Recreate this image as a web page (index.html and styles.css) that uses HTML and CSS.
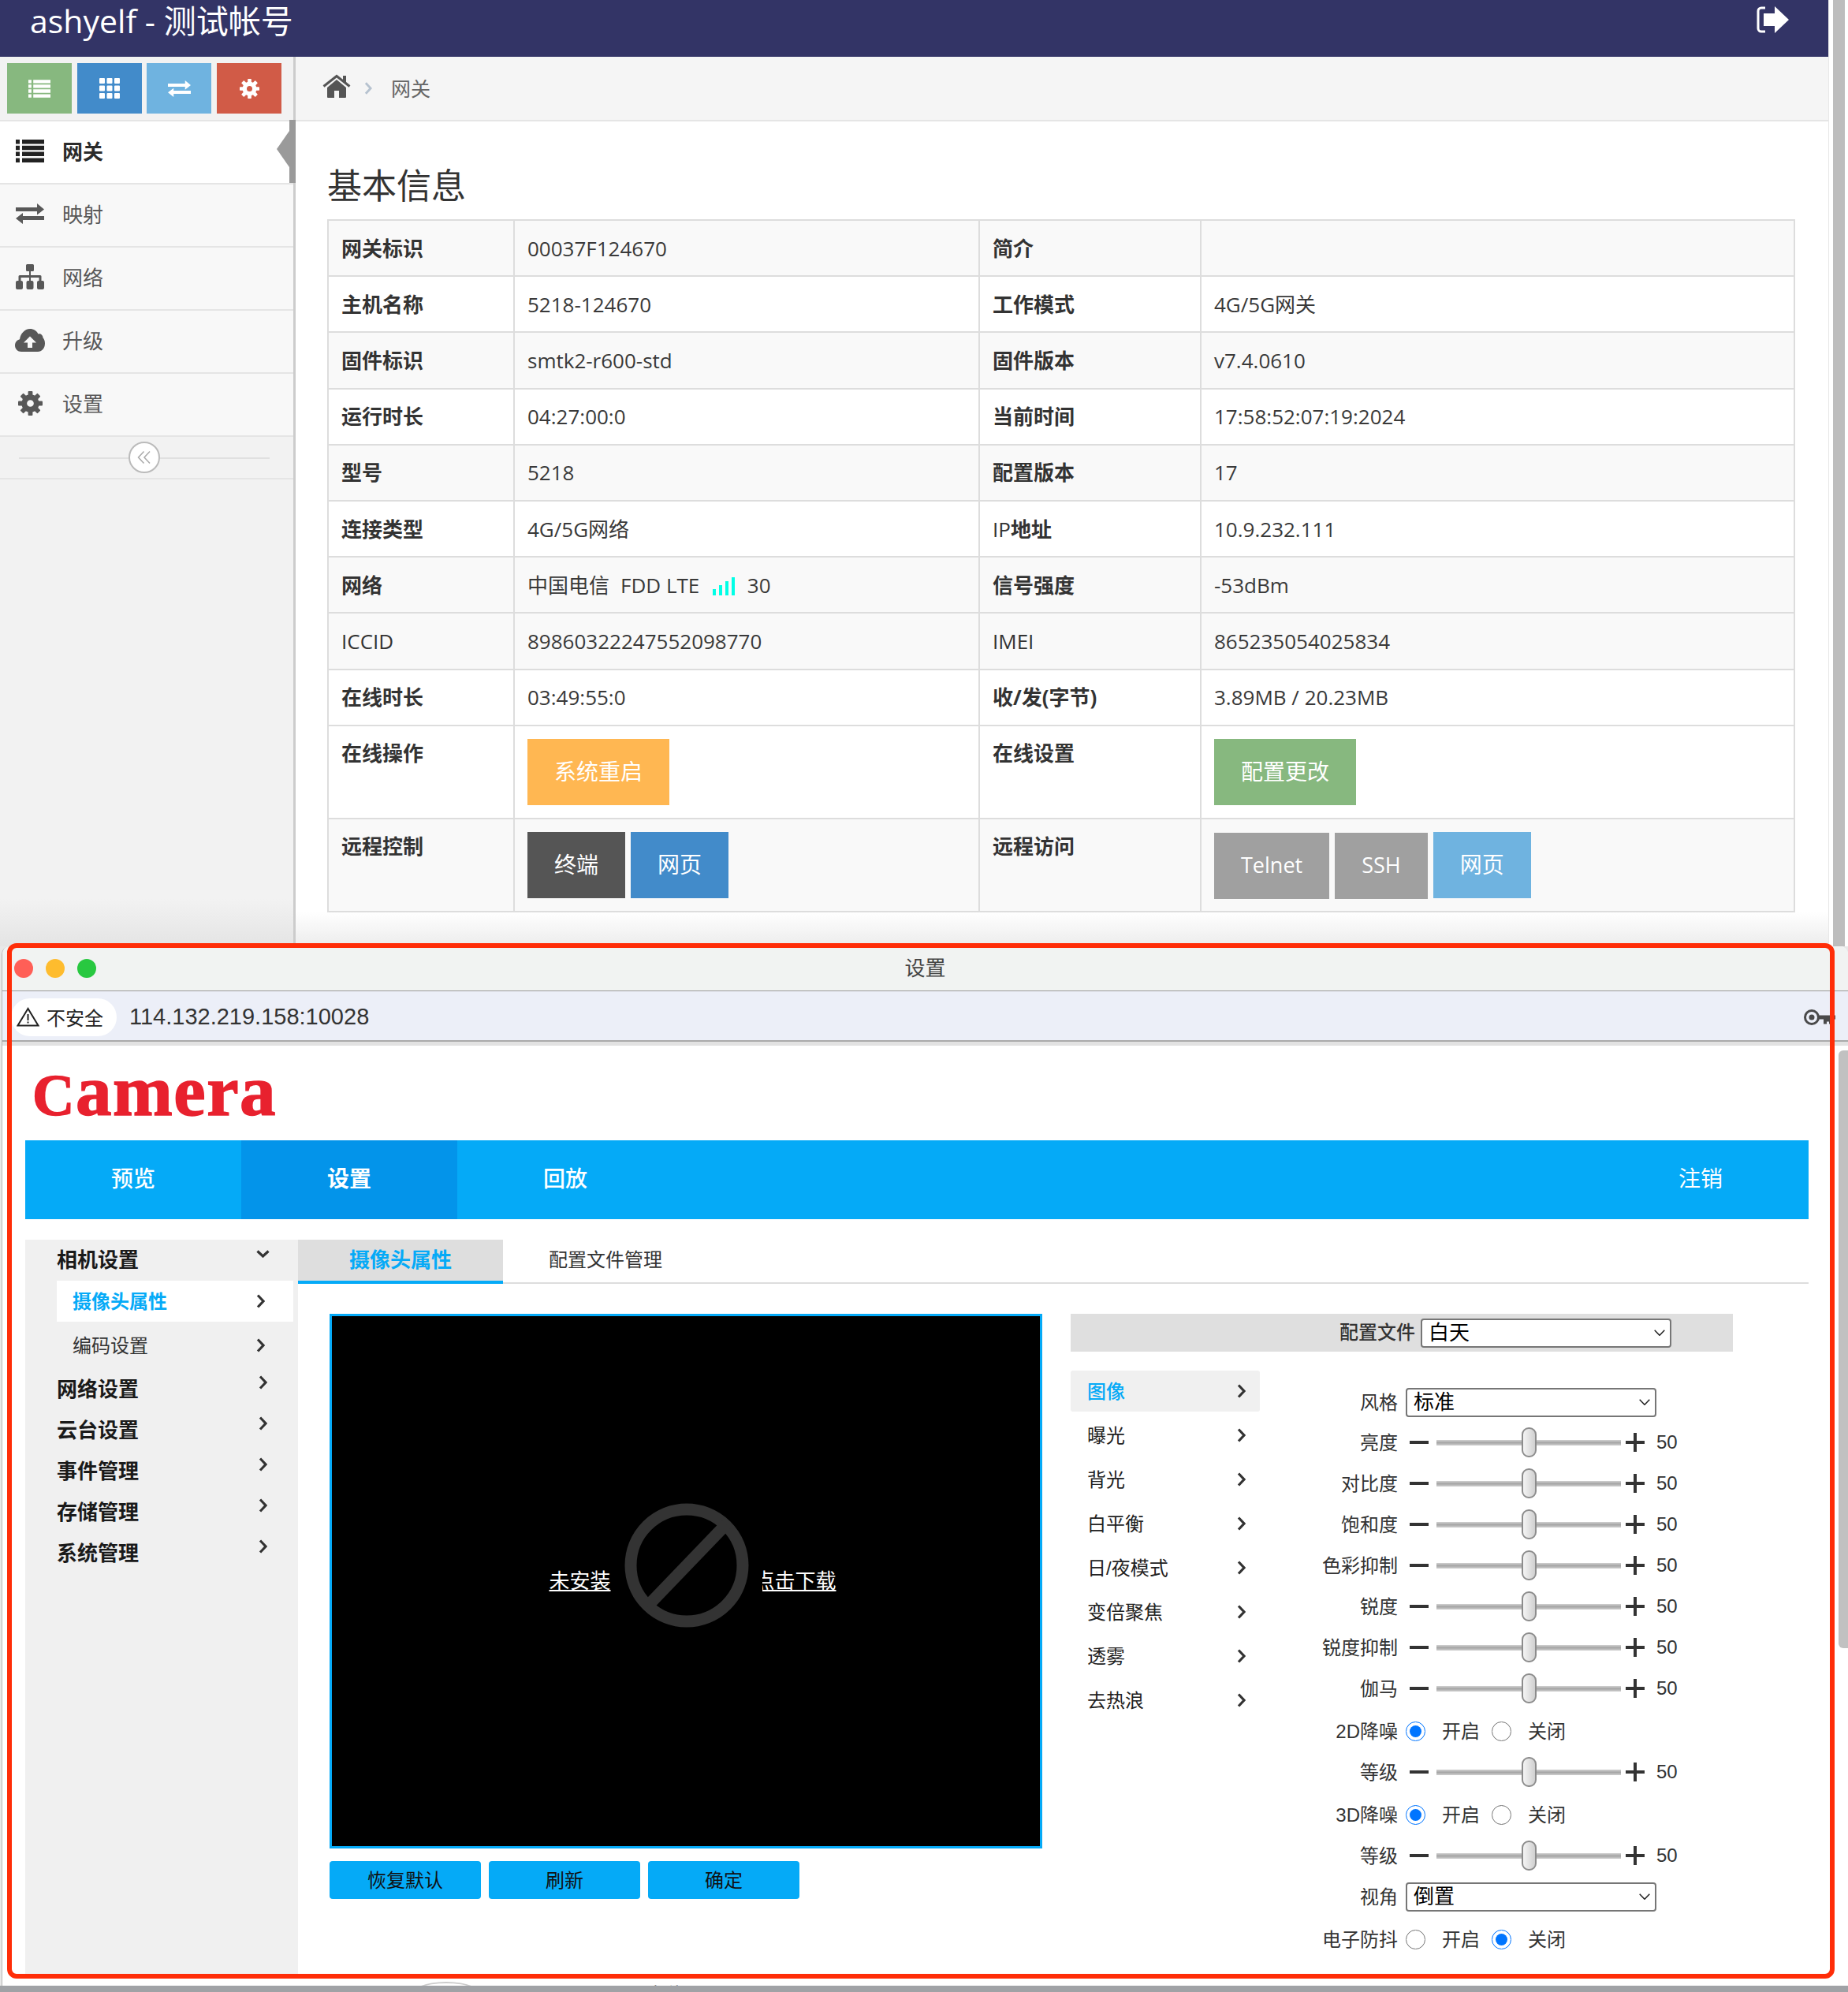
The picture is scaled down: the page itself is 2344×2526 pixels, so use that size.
FILE: index.html
```html
<!DOCTYPE html>
<html lang="zh">
<head>
  <meta charset="UTF-8" />
  <title>网关 - 设置</title>
  <link rel="stylesheet" href="styles.css">
</head>
<body>
  <svg class="defs" width="0" height="0">
    <symbol id="i-list" viewBox="0 0 36 29">
      <path d="M0 0h5v5.500H0zM8 0h28v5.500H8zM0 7.800h5v5.500H0zM8 7.800h28v5.500H8zM0 15.600h5v5.500H0zM8 15.600h28v5.500H8zM0 23.400h5V29H0zM8 23.400h28V29H8z"/>
    </symbol>
    <symbol id="i-th" viewBox="0 0 26 26">
      <path d="M0 1a1 1 0 0 1 1-1h5a1 1 0 0 1 1 1v5a1 1 0 0 1-1 1H1a1 1 0 0 1-1-1zM9.500 1a1 1 0 0 1 1-1h5a1 1 0 0 1 1 1v5a1 1 0 0 1-1 1h-5a1 1 0 0 1-1-1zM19 1a1 1 0 0 1 1-1h5a1 1 0 0 1 1 1v5a1 1 0 0 1-1 1h-5a1 1 0 0 1-1-1zM0 10.500a1 1 0 0 1 1-1h5a1 1 0 0 1 1 1v5a1 1 0 0 1-1 1H1a1 1 0 0 1-1-1zM9.500 10.500a1 1 0 0 1 1-1h5a1 1 0 0 1 1 1v5a1 1 0 0 1-1 1h-5a1 1 0 0 1-1-1zM19 10.500a1 1 0 0 1 1-1h5a1 1 0 0 1 1 1v5a1 1 0 0 1-1 1h-5a1 1 0 0 1-1-1zM0 20a1 1 0 0 1 1-1h5a1 1 0 0 1 1 1v5a1 1 0 0 1-1 1H1a1 1 0 0 1-1-1zM9.500 20a1 1 0 0 1 1-1h5a1 1 0 0 1 1 1v5a1 1 0 0 1-1 1h-5a1 1 0 0 1-1-1zM19 20a1 1 0 0 1 1-1h5a1 1 0 0 1 1 1v5a1 1 0 0 1-1 1h-5a1 1 0 0 1-1-1z"/>
    </symbol>
    <symbol id="i-exchange" viewBox="0 0 36 26">
      <path d="M0 5h27V0l9 7.500-9 7V10H0zM36 16H9v-4l-9 7 9 7v-5h27z"/>
    </symbol>
    <symbol id="i-cog" viewBox="0 0 32 32">
      <circle cx="16" cy="16" r="8" fill="none" stroke="currentColor" stroke-width="7"/>
      <g>
        <rect x="13" y="0" width="6" height="7" rx="1"/>
        <rect x="13" y="25" width="6" height="7" rx="1"/>
        <rect x="0" y="13" width="7" height="6" rx="1"/>
        <rect x="25" y="13" width="7" height="6" rx="1"/>
        <rect x="13" y="0" width="6" height="7" rx="1" transform="rotate(45 16 16)"/>
        <rect x="13" y="25" width="6" height="7" rx="1" transform="rotate(45 16 16)"/>
        <rect x="0" y="13" width="7" height="6" rx="1" transform="rotate(45 16 16)"/>
        <rect x="25" y="13" width="7" height="6" rx="1" transform="rotate(45 16 16)"/>
      </g>
    </symbol>
    <symbol id="i-sitemap" viewBox="0 0 36 32">
      <path d="M13 1.500A1.500 1.500 0 0 1 14.500 0h7A1.500 1.500 0 0 1 23 1.500v6A1.500 1.500 0 0 1 21.500 9H19v5h12a1.500 1.500 0 0 1 1.500 1.500V21h-3v-4H19v4h-2v-4H6.500v4h-3v-5.500A1.500 1.500 0 0 1 5 14h12V9h-2.500A1.500 1.500 0 0 1 13 7.500zM0 23a2 2 0 0 1 2-2h5a2 2 0 0 1 2 2v7a2 2 0 0 1-2 2H2a2 2 0 0 1-2-2zM13.500 23a2 2 0 0 1 2-2h5a2 2 0 0 1 2 2v7a2 2 0 0 1-2 2h-5a2 2 0 0 1-2-2zM27 23a2 2 0 0 1 2-2h5a2 2 0 0 1 2 2v7a2 2 0 0 1-2 2h-5a2 2 0 0 1-2-2z"/>
    </symbol>
    <symbol id="i-cloud" viewBox="0 0 38 29">
      <path fill-rule="evenodd" d="M8 29c-4.500 0-8-3.500-8-8 0-3.800 2.600-7 6-7.800C7 6 12.500 0 19 0c4.600 0 8.700 2.500 10.400 6.500 3.200-.7 6 1.600 6.100 4.800 1.600 1.800 2.500 4.300 2.500 7.200 0 6-4 10.500-9 10.500zM19 9.500 11 17.500h5V24h6v-6.500h5z"/>
    </symbol>
    <symbol id="i-home" viewBox="0 0 36 30">
      <path d="M6 17 18 7l12 10v12a1 1 0 0 1-1 1h-8v-9h-6v9H7a1 1 0 0 1-1-1z"/>
      <path d="M26 2h4v9l-4-3z"/>
      <path d="M1.500 15.500 18 2.500l16.500 13" fill="none" stroke="currentColor" stroke-width="3"/>
    </symbol>
    <symbol id="i-right" viewBox="0 0 11 18">
      <path d="M2 1.500 9 9l-7 7.500" fill="none" stroke="currentColor" stroke-width="3.200"/>
    </symbol>
    <symbol id="i-down" viewBox="0 0 17 10">
      <path d="M1.500 1.500 8.500 8l7-6.500" fill="none" stroke="currentColor" stroke-width="3.200"/>
    </symbol>
    <symbol id="i-minus" viewBox="0 0 24 24">
      <path d="M0 10h24v4H0z"/>
    </symbol>
    <symbol id="i-plus" viewBox="0 0 24 24">
      <path d="M10 0h4v10h10v4H14v10h-4V14H0v-4h10z"/>
    </symbol>
    <symbol id="i-select" viewBox="0 0 14 8">
      <path d="M.7.700 7 7.300 13.300.700" fill="none" stroke="currentColor" stroke-width="1.500"/>
    </symbol>
  </svg>

  <div class="admin">
    <div class="admin-left">
      <header class="topbar">
        <div class="brand">ashyelf - 测试帐号</div>
        <svg class="logout" viewBox="0 0 42 34">
          <path d="M12 2H7a4 4 0 0 0-4 4v22a4 4 0 0 0 4 4h5" fill="none" stroke="#fff" stroke-width="3"/>
          <path d="M10 9h14V0l18 17-18 17v-9H10z" fill="#fff"/>
        </svg>
      </header>

      <div class="admin-body">
        <aside class="sidebar">
          <div class="shortcuts">
            <span class="shortcut green"><svg class="ic-list-s"><use href="#i-list"/></svg></span>
            <span class="shortcut blue"><svg class="ic-th-s"><use href="#i-th"/></svg></span>
            <span class="shortcut sky"><svg class="ic-ex-s"><use href="#i-exchange"/></svg></span>
            <span class="shortcut red"><svg class="ic-cog-s"><use href="#i-cog"/></svg></span>
          </div>
          <ul class="side-nav">
            <li class="active">
              <span class="side-icon"><svg class="ic-list"><use href="#i-list"/></svg></span>网关
              <span class="side-marker"></span>
            </li>
            <li><span class="side-icon"><svg class="ic-ex"><use href="#i-exchange"/></svg></span>映射</li>
            <li><span class="side-icon"><svg class="ic-map"><use href="#i-sitemap"/></svg></span>网络</li>
            <li><span class="side-icon"><svg class="ic-cloud"><use href="#i-cloud"/></svg></span>升级</li>
            <li><span class="side-icon"><svg class="ic-cog"><use href="#i-cog"/></svg></span>设置</li>
          </ul>
          <div class="collapse">
            <span class="collapse-btn">
              <svg viewBox="0 0 18 18" width="18" height="18"><path d="M8.500 1.500 1.500 9l7 7.500M16 1.500 9 9l7 7.500" fill="none" stroke="#aaa" stroke-width="1.500"/></svg>
            </span>
          </div>
        </aside>

        <main class="main">
          <div class="crumbs">
            <svg class="ic-home"><use href="#i-home"/></svg>
            <svg class="ic-crumb"><use href="#i-right"/></svg>
            <span>网关</span>
          </div>
          <div class="main-inner">
            <h1>基本信息</h1>
            <table class="info">
              <colgroup><col class="c1"><col class="c2"><col class="c3"><col class="c4"></colgroup>
              <tr class="alt"><th>网关标识</th><td>00037F124670</td><th>简介</th><td></td></tr>
              <tr><th>主机名称</th><td>5218-124670</td><th>工作模式</th><td>4G/5G网关</td></tr>
              <tr class="alt"><th>固件标识</th><td>smtk2-r600-std</td><th>固件版本</th><td>v7.4.0610</td></tr>
              <tr><th>运行时长</th><td>04:27:00:0</td><th>当前时间</th><td>17:58:52:07:19:2024</td></tr>
              <tr class="alt"><th>型号</th><td>5218</td><th>配置版本</th><td>17</td></tr>
              <tr><th>连接类型</th><td>4G/5G网络</td><th><span class="latin">IP</span>地址</th><td>10.9.232.111</td></tr>
              <tr class="alt">
                <th>网络</th>
                <td>
                  <span class="carrier">中国电信</span><span>FDD LTE</span>
                  <svg class="signal" viewBox="0 0 28 23" width="28" height="23"><path d="M0 15h4v8H0zM8 10h4v13H8zM16 5h4v18h-4zM24 0h4v23h-4z"/></svg>
                  <span>30</span>
                </td>
                <th>信号强度</th><td>-53dBm</td>
              </tr>
              <tr class="alt"><th class="latin">ICCID</th><td>89860322247552098770</td><th class="latin">IMEI</th><td>865235054025834</td></tr>
              <tr><th>在线时长</th><td>03:49:55:0</td><th>收/发(字节)</th><td>3.89MB / 20.23MB</td></tr>
              <tr class="actions">
                <th>在线操作</th>
                <td><a class="btn orange">系统重启</a></td>
                <th>在线设置</th>
                <td><a class="btn green">配置更改</a></td>
              </tr>
              <tr class="actions alt">
                <th>远程控制</th>
                <td><a class="btn dark">终端</a><a class="btn blue">网页</a></td>
                <th>远程访问</th>
                <td><a class="btn grey">Telnet</a><a class="btn grey">SSH</a><a class="btn sky">网页</a></td>
              </tr>
            </table>
          </div>
        </main>
      </div>
    </div>
    <div class="admin-scroll"><div class="admin-thumb"></div></div>
  </div>

  <div class="window">
    <div class="titlebar">
      <span class="light l-red"></span>
      <span class="light l-yellow"></span>
      <span class="light l-green"></span>
      <span class="win-title">设置</span>
    </div>
    <div class="toolbar">
      <span class="pill">
        <svg viewBox="0 0 29 25" width="29" height="25"><path d="M14.500 2 1.500 23.500h26z" fill="none" stroke="#222" stroke-width="2"/><path d="M13.500 9h2v8h-2zM13.500 18.500h2v2h-2z" fill="#222"/></svg>
        不安全
      </span>
      <span class="url">114.132.219.158:10028</span>
      <svg class="key" viewBox="0 0 40 20" width="40" height="20">
        <circle cx="10" cy="10" r="8.500" fill="none" stroke="#4a4a4a" stroke-width="3"/>
        <circle cx="10" cy="10" r="3.500" fill="#4a4a4a"/>
        <path d="M18 7.500h22v5h-4v6h-4v-3h-3v3h-4v-6h-7z" fill="#4a4a4a"/>
      </svg>
    </div>

    <div class="win-body">
      <div class="page">
        <div class="logo"><span class="logo-c">C</span>amera</div>

        <nav class="nav">
          <a>预览</a>
          <a class="current">设置</a>
          <a>回放</a>
          <a class="logoff">注销</a>
        </nav>

        <div class="settings">
          <div class="tree">
            <div class="tree-head"><span>相机设置</span><svg class="ch-down"><use href="#i-down"/></svg></div>
            <div class="tree-sub current"><span>摄像头属性</span><svg class="ch-right"><use href="#i-right"/></svg></div>
            <div class="tree-sub"><span>编码设置</span><svg class="ch-right"><use href="#i-right"/></svg></div>
            <div class="tree-groups">
              <div class="tree-head"><span>网络设置</span><svg class="ch-right up"><use href="#i-right"/></svg></div>
              <div class="tree-head"><span>云台设置</span><svg class="ch-right up"><use href="#i-right"/></svg></div>
              <div class="tree-head"><span>事件管理</span><svg class="ch-right up"><use href="#i-right"/></svg></div>
              <div class="tree-head"><span>存储管理</span><svg class="ch-right up"><use href="#i-right"/></svg></div>
              <div class="tree-head"><span>系统管理</span><svg class="ch-right up"><use href="#i-right"/></svg></div>
            </div>
          </div>

          <div class="content">
            <div class="tabs">
              <a class="tab current">摄像头属性</a>
              <a class="tab">配置文件管理</a>
            </div>

            <div class="columns">
              <div class="left-col">
                <div class="video">
                  <u class="video-text">未安装</u>
                  <svg class="no-plugin" viewBox="-96 -79 192 158" width="192" height="158">
                    <circle r="71" fill="none" stroke="#333" stroke-width="15"/>
                    <path d="M-50 52 50-52" stroke="#333" stroke-width="15"/>
                  </svg>
                  <span class="video-clip"><u class="video-text">点击下载</u></span>
                </div>
                <div class="video-btns">
                  <button>恢复默认</button>
                  <button>刷新</button>
                  <button>确定</button>
                </div>
              </div>

              <div class="panel">
                <div class="profile">
                  <label>配置文件</label>
                  <span class="sel sel-profile">
                    <select><option>白天</option></select>
                    <svg class="sel-arrow"><use href="#i-select"/></svg>
                  </span>
                </div>

                <div class="panel-body">
                  <ul class="menu">
                    <li class="current"><span>图像</span><svg class="ch-right"><use href="#i-right"/></svg></li>
                    <li><span>曝光</span><svg class="ch-right"><use href="#i-right"/></svg></li>
                    <li><span>背光</span><svg class="ch-right"><use href="#i-right"/></svg></li>
                    <li><span>白平衡</span><svg class="ch-right"><use href="#i-right"/></svg></li>
                    <li><span>日/夜模式</span><svg class="ch-right"><use href="#i-right"/></svg></li>
                    <li><span>变倍聚焦</span><svg class="ch-right"><use href="#i-right"/></svg></li>
                    <li><span>透雾</span><svg class="ch-right"><use href="#i-right"/></svg></li>
                    <li><span>去热浪</span><svg class="ch-right"><use href="#i-right"/></svg></li>
                  </ul>

                  <div class="form">
                    <div class="row row-select">
                      <label>风格</label>
                      <span class="sel"><select><option>标准</option></select><svg class="sel-arrow"><use href="#i-select"/></svg></span>
                    </div>
                    <div class="row">
                      <label>亮度</label>
                      <svg class="step"><use href="#i-minus"/></svg><input type="range" value="50"><svg class="step"><use href="#i-plus"/></svg><span class="val">50</span>
                    </div>
                    <div class="row">
                      <label>对比度</label>
                      <svg class="step"><use href="#i-minus"/></svg><input type="range" value="50"><svg class="step"><use href="#i-plus"/></svg><span class="val">50</span>
                    </div>
                    <div class="row">
                      <label>饱和度</label>
                      <svg class="step"><use href="#i-minus"/></svg><input type="range" value="50"><svg class="step"><use href="#i-plus"/></svg><span class="val">50</span>
                    </div>
                    <div class="row">
                      <label>色彩抑制</label>
                      <svg class="step"><use href="#i-minus"/></svg><input type="range" value="50"><svg class="step"><use href="#i-plus"/></svg><span class="val">50</span>
                    </div>
                    <div class="row">
                      <label>锐度</label>
                      <svg class="step"><use href="#i-minus"/></svg><input type="range" value="50"><svg class="step"><use href="#i-plus"/></svg><span class="val">50</span>
                    </div>
                    <div class="row">
                      <label>锐度抑制</label>
                      <svg class="step"><use href="#i-minus"/></svg><input type="range" value="50"><svg class="step"><use href="#i-plus"/></svg><span class="val">50</span>
                    </div>
                    <div class="row">
                      <label>伽马</label>
                      <svg class="step"><use href="#i-minus"/></svg><input type="range" value="50"><svg class="step"><use href="#i-plus"/></svg><span class="val">50</span>
                    </div>
                    <div class="row row-radio">
                      <label>2D降噪</label>
                      <input type="radio" name="n2d" checked><span class="opt">开启</span><input type="radio" name="n2d"><span class="opt">关闭</span>
                    </div>
                    <div class="row">
                      <label>等级</label>
                      <svg class="step"><use href="#i-minus"/></svg><input type="range" value="50"><svg class="step"><use href="#i-plus"/></svg><span class="val">50</span>
                    </div>
                    <div class="row row-radio">
                      <label>3D降噪</label>
                      <input type="radio" name="n3d" checked><span class="opt">开启</span><input type="radio" name="n3d"><span class="opt">关闭</span>
                    </div>
                    <div class="row">
                      <label>等级</label>
                      <svg class="step"><use href="#i-minus"/></svg><input type="range" value="50"><svg class="step"><use href="#i-plus"/></svg><span class="val">50</span>
                    </div>
                    <div class="row">
                      <label>视角</label>
                      <span class="sel"><select><option>倒置</option></select><svg class="sel-arrow"><use href="#i-select"/></svg></span>
                    </div>
                    <div class="row row-radio row-last">
                      <label>电子防抖</label>
                      <input type="radio" name="eis"><span class="opt">开启</span><input type="radio" name="eis" checked><span class="opt">关闭</span>
                    </div>
                  </div>
                </div>
              </div>
            </div>
          </div>
        </div>

        <div class="page-foot">
          <span class="foot-arc"></span>
          <span class="foot-text">定位</span>
        </div>
      </div>
      <div class="win-scroll"><div class="win-thumb"></div></div>
    </div>
  </div>

  <div class="desk"></div>
  <div class="red-frame"></div>
</body>
</html>
```

FILE: styles.css
```css
* {
  box-sizing: border-box;
}

body {
  position: relative;
  margin: 0;
  width: 2344px;
  height: 2526px;
  overflow: hidden;
  background: #e8e8e8;
  font-family: 'Open Sans', 'Noto Sans CJK SC', sans-serif;
  font-size: 26px;
  color: #393939;
}

.defs {
  position: absolute;
}

ul {
  list-style: none;
  margin: 0;
  padding: 0;
}

svg {
  fill: currentColor;
  flex: none;
}

/* ---------- gateway admin page ---------- */

.admin {
  display: flex;
  height: 1200px;
}

.admin-left {
  flex: 1;
  display: flex;
  flex-direction: column;
}

.topbar {
  display: flex;
  justify-content: space-between;
  height: 72px;
  padding: 0 50px 0 38px;
  background: #333466;
  color: #fff;
}

.brand {
  font-size: 41px;
  line-height: 52px;
}

.logout {
  width: 42px;
  height: 34px;
  margin-top: 8px;
}

.admin-body {
  flex: 1;
  display: flex;
}

.sidebar {
  width: 375px;
  border-right: 3px solid #ccc;
  background: linear-gradient(#f2f2f2 calc(100% - 60px), #e4e4e4);
}

.shortcuts {
  display: flex;
  gap: 6.7px;
  height: 82px;
  padding: 8px 9px;
  border-bottom: 2px solid #e5e5e5;
}

.shortcut {
  display: flex;
  align-items: center;
  justify-content: center;
  width: 82px;
  height: 64px;
  color: #fff;
}

.shortcut.green { background: #87b87f; }
.shortcut.blue { background: #428bca; }
.shortcut.sky { background: #6fb3e0; }
.shortcut.red { background: #d15b47; }

.ic-list-s { width: 28px; height: 25px; }
.ic-th-s { width: 26px; height: 26px; }
.ic-ex-s { width: 29px; height: 21px; }
.ic-cog-s { width: 25px; height: 25px; }

.side-nav li {
  position: relative;
  display: flex;
  align-items: center;
  height: 80px;
  padding: 0 0 4px 19px;
  background: #f8f8f8;
  border-bottom: 2px solid #e5e5e5;
  font-size: 26px;
  color: #585858;
}

.side-nav li.active {
  background: #fff;
  color: #2b2b2b;
  font-weight: 700;
}

.side-icon {
  display: flex;
  justify-content: center;
  width: 38px;
  margin-right: 22px;
}

.ic-list { width: 36px; height: 29px; color: #222; }
.ic-ex { width: 36px; height: 26px; }
.ic-map { width: 36px; height: 32px; }
.ic-cloud { width: 38px; height: 29px; }
.ic-cog { width: 31px; height: 31px; }

.side-marker {
  position: absolute;
  right: -3px;
  top: -2px;
  width: 8px;
  height: 80px;
  background: #9a9a9a;
}

.side-marker::before {
  content: "";
  position: absolute;
  right: 8px;
  top: 14px;
  border-style: solid;
  border-width: 23px 16px 23px 0;
  border-color: transparent #9a9a9a transparent transparent;
}

.collapse {
  display: flex;
  align-items: center;
  justify-content: center;
  position: relative;
  height: 54px;
  border-bottom: 2px solid #e5e5e5;
}

.collapse::before {
  content: "";
  position: absolute;
  left: 24px;
  right: 30px;
  top: 26px;
  height: 2px;
  background: #e0e0e0;
}

.collapse-btn {
  position: relative;
  display: flex;
  align-items: center;
  justify-content: center;
  width: 40px;
  height: 40px;
  margin-right: 6px;
  background: #fff;
  border: 2px solid #bbb;
  border-radius: 50%;
}

.main {
  flex: 1;
  background: linear-gradient(#fff calc(100% - 44px), #ececec);
}

.crumbs {
  display: flex;
  align-items: center;
  height: 82px;
  padding: 0 0 2px 34px;
  background: #f5f5f5;
  border-bottom: 2px solid #e5e5e5;
  color: #666;
  font-size: 25px;
}

.ic-home {
  width: 36px;
  height: 30px;
  color: #555;
  margin-top: -4px;
}

.ic-crumb {
  width: 10px;
  height: 16px;
  margin: 2px 24px 0 17px;
  color: #b6c2cf;
}

.main-inner {
  padding: 0 42px 0 40px;
}

h1 {
  margin: 51px 0 13px;
  font-size: 44px;
  line-height: 60px;
  font-weight: 400;
  color: #333;
}

.info {
  width: 100%;
  table-layout: fixed;
  border-collapse: collapse;
  background: #fff;
}

.c1 { width: 236px; }
.c2 { width: 590px; }
.c3 { width: 281px; }

.info th,
.info td {
  height: 71.200px;
  padding: 0 16px;
  border: 2px solid #ddd;
  text-align: left;
  vertical-align: middle;
  line-height: 32px;
}

.info th {
  font-weight: 700;
  color: #333;
}

.info th.latin,
.info .latin {
  font-weight: 400;
}

.info tr.alt {
  background: #f9f9f9;
}

.info .actions th,
.info .actions td {
  height: 118px;
  vertical-align: top;
}

.info .actions th {
  padding-top: 18px;
}

.info .actions td {
  padding-top: 16px;
}

.carrier {
  margin-right: 14px;
}

.signal {
  margin: 0 9px 0 10px;
  fill: #00ffe6;
  vertical-align: -3px;
}

.btn {
  display: inline-block;
  height: 84px;
  padding: 0 34px;
  margin-right: 7px;
  line-height: 82px;
  font-size: 28px;
  color: #fff;
}

.btn.orange { background: #ffb752; }
.btn.green { background: #87b87f; }
.btn.dark { background: #555; }
.btn.blue { background: #428bca; }
.btn.grey { background: #a0a0a0; font-size: 27px; }
.btn.sky { background: #6fb3e0; }

.admin-scroll {
  width: 25px;
  padding-left: 5px;
  background: #fff;
  border-left: 1px solid #e8e8e8;
}

.admin-thumb {
  width: 15px;
  height: 100%;
  background: #bdbdbd;
}

/* ---------- browser window ---------- */

.window {
  margin-left: 2px;
  height: 1318px;
  display: flex;
  flex-direction: column;
  background: #fff;
  border-left: 1px solid #b5b5b5;
  border-radius: 10px 10px 0 0;
  overflow: hidden;
}

.titlebar {
  position: relative;
  display: flex;
  align-items: center;
  gap: 16px;
  height: 57px;
  padding-left: 15px;
  background: #f1f3f2;
  border-bottom: 1px solid #999;
}

.light {
  width: 24px;
  height: 24px;
  border-radius: 50%;
}

.l-red { background: #ff5f57; }
.l-yellow { background: #febc2e; }
.l-green { background: #28c840; }

.win-title {
  position: absolute;
  left: 0;
  right: 0;
  padding-bottom: 5px;
  text-align: center;
  font-size: 26px;
  color: #444;
}

.toolbar {
  display: flex;
  align-items: center;
  height: 69px;
  padding-left: 11px;
  padding-top: 1px;
  background: #eceff8;
  border-bottom: 5px solid #e2e2e2;
  box-shadow: inset 0 -2px 0 #aaa;
  font-family: 'Liberation Sans', 'Noto Sans CJK SC', sans-serif;
}

.pill {
  display: flex;
  align-items: center;
  gap: 9px;
  width: 134px;
  height: 48px;
  padding-left: 7px;
  background: #fff;
  border-radius: 24px;
  font-size: 24px;
  color: #222;
}

.url {
  margin-left: 16px;
  font-size: 29px;
  color: #333;
}

.key {
  margin-left: auto;
  margin-right: 16px;
}

.win-body {
  flex: 1;
  display: flex;
  font-family: 'Liberation Sans', 'Noto Sans CJK SC', sans-serif;
  font-size: 24px;
  color: #333;
}

.page {
  width: 2329px;
  padding-left: 29px;
}

.win-scroll {
  flex: 1;
  padding-top: 6px;
}

.win-thumb {
  height: 758px;
  background: #c1c1c1;
  border-radius: 6px 0 0 6px;
}

.logo {
  display: flex;
  align-items: baseline;
  height: 120px;
  padding: 0 0 0 9px;
  font-family: 'Liberation Serif', serif;
  font-weight: 700;
  font-size: 91px;
  line-height: 116px;
  letter-spacing: 1.500px;
  color: #e8212e;
  -webkit-text-stroke: 1.500px #e8212e;
}

.logo-c {
  font-size: 74px;
}

.nav {
  display: flex;
  width: 2262px;
  height: 100px;
  background: #05aaf7;
}

.nav a {
  width: 274px;
  line-height: 100px;
  text-align: center;
  font-size: 28px;
  font-weight: 500;
  color: #fff;
}

.nav a.current {
  background: #0394ea;
  font-weight: 700;
}

.nav a.logoff {
  margin-left: auto;
  font-weight: 400;
}

.settings {
  display: flex;
  width: 2262px;
  height: 933px;
  margin-top: 26px;
}

.tree {
  width: 346px;
  background: #f0f0f0;
}

.tree-head {
  display: flex;
  align-items: center;
  justify-content: space-between;
  height: 52px;
  padding: 0 36px 0 40px;
  font-size: 26px;
  font-weight: 700;
  color: #1a1a1a;
}

.tree-head span {
  padding-bottom: 6px;
}

.tree-groups {
  margin-top: 3px;
}

.tree-sub {
  display: flex;
  align-items: center;
  justify-content: space-between;
  width: 300px;
  height: 52px;
  margin: 0 0 4px 40px;
  padding: 0 36px 0 20px;
}

.tree-sub span {
  padding-bottom: 4px;
}

.tree-sub.current {
  background: #fff;
  color: #05aaf7;
  font-weight: 700;
}

.ch-down {
  width: 17px;
  height: 10px;
  margin-bottom: 16px;
  color: #333;
}

.ch-right {
  width: 11px;
  height: 18px;
  color: #333;
}

.ch-right.up {
  margin: 0 3px 18px 0;
}

.content {
  flex: 1;
}

.tabs {
  display: flex;
  height: 56px;
  border-bottom: 2px solid #ddd;
}

.tab {
  height: 54px;
  line-height: 52px;
}

.tab.current {
  width: 260px;
  height: 56px;
  background: #dedede;
  border-bottom: 4px solid #05aaf7;
  text-align: center;
  font-size: 26px;
  font-weight: 700;
  color: #05aaf7;
}

.tab:not(.current) {
  margin-left: 58px;
}

.columns {
  display: flex;
  padding: 38px 0 0 40px;
}

.video {
  display: flex;
  align-items: center;
  justify-content: center;
  width: 904px;
  height: 678px;
  padding-left: 17px;
  background: #000;
  border: 3px solid #05aaf7;
}

.video-text {
  font-size: 26px;
  line-height: 32px;
  color: #fff;
  white-space: nowrap;
}

.no-plugin {
  margin-bottom: 40px;
}

.video-clip {
  display: flex;
  justify-content: flex-end;
  width: 94px;
  overflow: hidden;
}

.video-btns {
  display: flex;
  gap: 10px;
  margin-top: 16px;
}

.video-btns button {
  width: 192px;
  height: 48px;
  padding: 0 0 4px;
  background: #05aaf7;
  border: 0;
  border-radius: 4px;
  font-family: inherit;
  font-size: 24px;
  color: #111;
}

.panel {
  width: 840px;
  margin-left: 36px;
}

.profile {
  display: flex;
  align-items: center;
  height: 48px;
  padding-left: 341px;
  background: #dfdfdf;
}

.profile label {
  margin-right: 7px;
  padding-bottom: 5px;
  font-weight: 500;
}

.sel {
  position: relative;
  display: block;
  width: 318px;
  height: 37px;
}

.sel select {
  display: block;
  width: 100%;
  height: 100%;
  padding: 0 0 0 8px;
  appearance: none;
  background: #fff;
  border: 2px solid #767676;
  border-radius: 4px;
  font-family: inherit;
  font-size: 26px;
  color: #000;
}

.sel-arrow {
  position: absolute;
  right: 8px;
  top: 14px;
  width: 14px;
  height: 8px;
  color: #222;
}

.panel-body {
  display: flex;
  margin-top: 24px;
}

.menu {
  width: 240px;
}

.menu li {
  display: flex;
  align-items: center;
  justify-content: space-between;
  height: 52px;
  margin-bottom: 4px;
  padding: 0 18px 0 21px;
  border-radius: 3px;
  color: #222;
}

.menu li span {
  padding-bottom: 4px;
}

.menu li.current {
  background: #f0f0f0;
  color: #05aaf7;
  font-weight: 500;
}

.form {
  margin-top: 15px;
}

.row {
  display: flex;
  align-items: center;
  height: 52px;
}

.row label {
  width: 175px;
  margin-right: 10px;
  padding-bottom: 4px;
  text-align: right;
}

.row-select {
  height: 50px;
}

.row-radio {
  height: 54px;
  padding-top: 2px;
}

.row-last {
  height: 56px;
  padding-top: 0;
}

.step {
  width: 24px;
  height: 24px;
  color: #333;
}

.row .step:first-of-type {
  margin-left: 5px;
}

.row input[type="range"] {
  appearance: none;
  width: 234px;
  height: 38px;
  margin: 0 6px 0 10px;
  background: transparent;
}

.row input[type="range"]::-webkit-slider-runnable-track {
  height: 7px;
  background: linear-gradient(#d0d0d0, #a6a6a6 50%, #d0d0d0);
}

.row input[type="range"]::-webkit-slider-thumb {
  appearance: none;
  width: 19px;
  height: 38px;
  margin-top: -15.500px;
  background: linear-gradient(90deg, #f4f4f4, #d0d0d0);
  border: 2px solid #8c8c8c;
  border-radius: 9px;
}

.val {
  margin-left: 15px;
}

.row input[type="radio"] {
  width: 25px;
  height: 25px;
  margin: 0;
}

.opt {
  width: 84px;
  padding: 0 0 3px 21px;
}

.page-foot {
  position: relative;
  height: 13px;
  overflow: hidden;
}

.foot-arc {
  position: absolute;
  left: 486px;
  top: 8px;
  width: 96px;
  height: 40px;
  border-top: 2px solid #ccc;
  border-radius: 50%;
}

.foot-text {
  position: absolute;
  left: 788px;
  top: 5px;
  color: #444;
}

.desk {
  height: 8px;
  background: #a0a2a6;
}

.red-frame {
  position: absolute;
  left: 9px;
  top: 1196px;
  width: 2318px;
  height: 1313px;
  border: 6px solid #ff2d08;
  border-radius: 12px;
}
```
